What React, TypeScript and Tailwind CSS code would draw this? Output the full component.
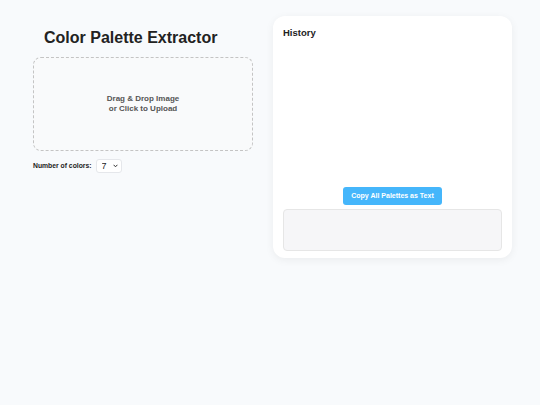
import { useState } from "react"

export default function App() {
    const [count, setCount] = useState<string>('7')

    return (
        <div className="min-h-[405px] w-full bg-[#f8fafc] font-['Liberation_Sans',Arial,sans-serif] text-[#222]">
            <div className="flex items-start gap-[20px] pl-[33px] pr-[28px] pt-[16px]">
                <div id="left" className="flex w-[220px] flex-col">
                    <h1 className="ml-[11px] mt-[11px] text-[16px] font-bold leading-[22px] text-[#222]">
                        Color Palette Extractor
                    </h1>
                    <div className="mt-[8px] flex h-[94px] cursor-pointer flex-col items-center justify-center rounded-[8px] border border-dashed border-[#c4c4c4] bg-[#f9fafb] text-center text-[8px] font-bold leading-[10px] text-[#555]">
                        <span>Drag &amp; Drop Image</span>
                        <span>or Click to Upload</span>
                    </div>
                    <div className="mt-[8px] flex items-center gap-[4px]">
                        <label className="text-[6.8px] font-bold text-[#222]">Number of colors:</label>
                        <div className="relative flex">
                            <select
                                value={count}
                                onChange={(e) => setCount(e.target.value)}
                                className="block h-[14px] w-[26px] appearance-none rounded-[3px] border border-[#e5e7eb] bg-white pl-[5px] text-[9px] leading-[12px] text-[#222] outline-none"
                            >
                                {[3, 4, 5, 6, 7, 8, 9, 10].map((n) => (
                                    <option key={n} value={n}>{n}</option>
                                ))}
                            </select>
                            <svg className="pointer-events-none absolute right-[4px] top-[5px]" width="5" height="4" viewBox="0 0 5 4">
                                <path d="M0.6 0.8 L2.5 2.8 L4.4 0.8" fill="none" stroke="#333" strokeWidth="1" />
                            </svg>
                        </div>
                    </div>
                </div>
                <div id="history" className="flex h-[242px] flex-1 flex-col rounded-[12px] bg-white px-[10px] pb-[7px] pt-[11px] shadow-[0_2px_8px_rgba(0,0,0,0.06)]">
                    <h3 className="text-[9.5px] font-bold leading-[12px] text-[#222]">History</h3>
                    <div className="flex-1" />
                    <button className="self-center rounded-[3px] bg-[#45b6fb] px-[8px] py-[4px] text-[7px] font-bold leading-[10px] text-white">
                        Copy All Palettes as Text
                    </button>
                    <textarea
                        readOnly
                        className="mt-[4px] h-[42px] w-full resize-none rounded-[4px] border border-[#e6e6e6] bg-[#f6f6f8] outline-none"
                    />
                </div>
            </div>
        </div>
    )
}
